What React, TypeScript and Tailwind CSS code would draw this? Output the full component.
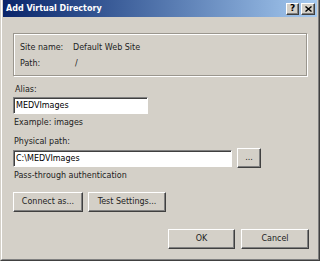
const raised =
    "bg-[#d4d0c8] border border-t-white border-l-white border-r-[#404040] border-b-[#404040] shadow-[inset_-1px_-1px_0_#808080]";

const Btn = ({ label, w }: { label: string; w: string }) => (
    <button className={`${raised} ${w} h-[20px] flex items-center justify-center text-[8px] text-[#222]`}>
        {label}
    </button>
);

const TextBox = ({ value, w }: { value: string; w: string }) => (
    <div
        className={`${w} h-[17px] bg-white border border-t-[#808080] border-l-[#808080] border-r-white border-b-white shadow-[inset_1px_1px_0_#404040] flex items-center pl-[2px] text-[8px] text-black`}
    >
        {value}
    </div>
);

const App = () => {
    return (
        <div
            className="w-[320px] h-[261px] overflow-hidden bg-[#d4d0c8] border-l border-r border-b border-l-[#d4d0c8] border-r-[#404040] border-b-[#404040]"
            style={{ fontFamily: "'DejaVu Sans', Verdana, sans-serif" }}
        >
            <div className="h-full border-l border-r border-b border-l-white border-r-[#808080] border-b-[#808080] pl-[1px] pr-[1px]">
                {/* title bar */}
                <div className="h-[17px] flex items-center bg-gradient-to-r from-[#0a246a] to-[#a6caf0] pl-[3px] pr-[2px]">
                    <span className="text-white font-bold text-[8px] leading-none">Add Virtual Directory</span>
                    <div className="ml-auto flex gap-[2px]">
                        <div className={`${raised} w-[13px] h-[12px] flex items-center justify-center text-[9px] font-bold leading-none text-black`}>
                            ?
                        </div>
                        <div className={`${raised} w-[14px] h-[12px] flex items-center justify-center`}>
                            <svg width="7" height="6" viewBox="0 0 7 6">
                                <path d="M0.5 0.5 L6.5 5.5 M6.5 0.5 L0.5 5.5" stroke="#000" strokeWidth="1.4" />
                            </svg>
                        </div>
                    </div>
                </div>

                <div className="pl-[10px] flex flex-col text-[8px] leading-[12px] text-[#222]">
                    {/* info group */}
                    <div className="mt-[16px] w-[294px] h-[43px] border border-[#9a968e] shadow-[inset_1px_1px_0_white,1px_1px_0_white] pl-[6px] pt-[8px]">
                        <div className="flex">
                            <span className="w-[53px]">Site name:</span>
                            <span>Default Web Site</span>
                        </div>
                        <div className="flex mt-[4px]">
                            <span className="w-[55px]">Path:</span>
                            <span>/</span>
                        </div>
                    </div>

                    <div className="mt-[8px] pl-[2px]">Alias:</div>
                    <div className="mt-[1px]">
                        <TextBox value="MEDVImages" w="w-[135px]" />
                    </div>
                    <div className="mt-[3px] pl-[1px]">Example: images</div>

                    <div className="mt-[7px] pl-[1px]">Physical path:</div>
                    <div className="flex items-start gap-[5px]">
                        <div className="mt-[2px]">
                            <TextBox value="C:\MEDVImages" w="w-[219px]" />
                        </div>
                        <Btn label="..." w="w-[24px]" />
                    </div>
                    <div className="mt-[2px] pl-[1px]">Pass-through authentication</div>

                    <div className="mt-[10px] flex gap-[5px]">
                        <Btn label="Connect as..." w="w-[70px]" />
                        <Btn label="Test Settings..." w="w-[78px]" />
                    </div>

                    <div className="mt-[17px] flex gap-[6px] pl-[155px]">
                        <Btn label="OK" w="w-[67px]" />
                        <Btn label="Cancel" w="w-[68px]" />
                    </div>
                </div>
            </div>
        </div>
    );
};

export default App;
